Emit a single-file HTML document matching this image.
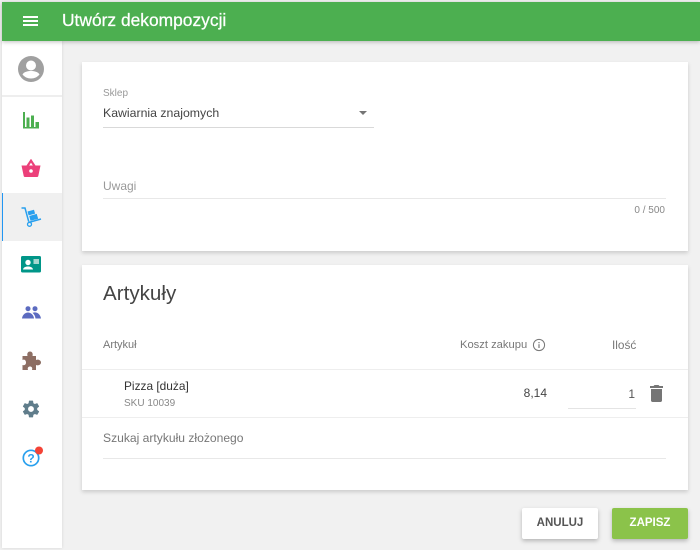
<!DOCTYPE html>
<html><head><meta charset="utf-8">
<style>
*{box-sizing:border-box}
html,body{margin:0;padding:0}
body{width:700px;height:550px;overflow:hidden;background:#f1f1f1;position:relative;font-family:"Liberation Sans",sans-serif;color:#444}
.a{position:absolute;white-space:nowrap}
.card{position:absolute;left:82px;width:606px;background:#fff;box-shadow:0 2px 4px rgba(0,0,0,.16)}
.l{position:absolute;height:1px;background:#e4e4e4}
svg{position:absolute;display:block}
</style></head><body>
<div class="a" style="left:2px;top:2px;width:698px;height:39px;background:#4caf50;box-shadow:0 1px 4px rgba(0,0,0,.25);z-index:3"></div>
<div class="a" style="left:23px;top:16px;width:15px;height:2px;background:#fff;z-index:4"></div>
<div class="a" style="left:23px;top:20px;width:15px;height:2px;background:#fff;z-index:4"></div>
<div class="a" style="left:23px;top:24px;width:15px;height:2px;background:#fff;z-index:4"></div>
<div class="a" style="left:62px;top:10px;font-size:17.4px;line-height:21px;color:#fff;z-index:4;-webkit-text-stroke:.25px #fff">Utwórz dekompozycji</div>

<div class="a" style="left:2px;top:41px;width:60px;height:507px;background:#fff;box-shadow:0 0 3px rgba(0,0,0,.12)"></div>
<div class="a" style="left:2px;top:95px;width:60px;height:2px;background:#eee"></div>
<div class="a" style="left:2px;top:193px;width:60px;height:48px;background:#f0f0f0;border-left:1px solid #2196f3"></div>

<svg style="left:17px;top:55px" width="28" height="28" viewBox="0 0 28 28"><circle cx="14" cy="14" r="13" fill="#a0a0a0"/><circle cx="14" cy="10.500" r="5" fill="#fff"/><path d="M5.500 19.500c1.500-2.800 5.500-3.500 8.500-3.500s7 .7 8.500 3.500c-2 2.500-5 4-8.500 4s-6.500-1.500-8.500-4z" fill="#fff"/></svg>

<svg style="left:22px;top:112px" width="18" height="18" viewBox="0 0 18 18" fill="#4caf50"><path d="M1 0h2v16H1z"/><rect x="1" y="15" width="16" height="1.500"/><rect x="4.500" y="5.500" width="3" height="10"/><rect x="9" y="3.500" width="3" height="12"/><rect x="13.500" y="10" width="3.500" height="6"/></svg>

<svg style="left:21px;top:159px" width="20" height="19" viewBox="0 0 20 19"><path d="M6.500 7l3.500-5.300L13.500 7" fill="none" stroke="#ec407a" stroke-width="2.200"/><path d="M.5 6.500h19l-2.200 10.500c-.1.600-.6 1-1.200 1H3.900c-.6 0-1.100-.4-1.200-1z" fill="#ec407a"/><circle cx="10" cy="12" r="1.800" fill="#fff"/></svg>

<svg style="left:21px;top:206px" width="21" height="21" viewBox="0 0 21 21"><path d="M0.500 2h3.500l3.700 13.500" fill="none" stroke="#29a0ee" stroke-width="1.500"/><path d="M7.500 16.500l12.500-3.500" fill="none" stroke="#29a0ee" stroke-width="1.500"/><circle cx="8.500" cy="18.300" r="2" fill="none" stroke="#29a0ee" stroke-width="1.300"/><path d="M6.500 5.500l6.500-1.800 1.100 3.900-6.500 1.800z" fill="#29a0ee"/><path d="M8.200 10l7.500-2.100 1.500 4.800-7.700 2.100z" fill="#29a0ee"/></svg>

<svg style="left:21px;top:256px" width="20" height="17" viewBox="0 0 20 17"><rect width="20" height="16.500" rx="1.500" fill="#009688"/><circle cx="7" cy="6.500" r="2.700" fill="#fff"/><path d="M2 13.500c.5-2.400 2.800-3 5-3s4.500 .6 5 3z" fill="#fff"/><rect x="12.500" y="3" width="5.500" height="5" fill="#a5d6cf"/></svg>

<svg style="left:22px;top:306px" width="19" height="13" viewBox="0 0 19 13" fill="#5c6bc0"><circle cx="6" cy="2.700" r="2.500"/><circle cx="13" cy="2.700" r="2.500"/><path d="M0 12.500c.3-3.500 3-6 6-6s5.700 2.500 6 6z"/><path d="M10.500 6.800c1-.3 1.800-.4 2.500-.4 3 0 5.500 2.600 6 6.100h-5.500c-.3-2.300-1.300-4.200-3-5.700z"/></svg>

<svg style="left:22px;top:351px" width="19" height="20" viewBox="0 0 19 20" fill="#8d6e63"><path d="M0.500 5h5c-.8-3 .8-4.500 2.500-4.500S11.300 2 10.500 5H14v4c2.500-1 5 .5 5 2.500S16.500 15 14 14v5h-4c.8-2.500-.5-3.500-2-3.500S5.200 16.500 6 19H.5v-5c2 .8 3.500-.5 3.500-2.500S2.500 8 .5 9z"/></svg>

<svg style="left:21px;top:399px" width="20" height="20" viewBox="0 0 24 24"><path fill="#607d8b" d="M19.430 12.980c.04-.32.07-.64.07-.98s-.03-.66-.07-.98l2.110-1.650c.19-.15.24-.42.12-.64l-2-3.460c-.12-.22-.39-.3-.61-.22l-2.490 1c-.52-.4-1.080-.73-1.690-.98l-.38-2.650C14.460 2.180 14.250 2 14 2h-4c-.25 0-.46.18-.49.42l-.38 2.650c-.61.25-1.170.59-1.690.98l-2.490-1c-.23-.09-.49 0-.61.22l-2 3.460c-.13.22-.07.49.12.64l2.110 1.650c-.04.32-.07.65-.07.98s.03.66.07.98l-2.110 1.650c-.19.15-.24.42-.12.64l2 3.460c.12.22.39.3.61.22l2.490-1c.52.4 1.080.73 1.690.98l.38 2.650c.03.24.24.42.49.42h4c.25 0 .46-.18.49-.42l.38-2.650c.61-.25 1.170-.59 1.690-.98l2.490 1c.23.09.49 0 .61-.22l2-3.460c.12-.22.07-.49-.12-.64l-2.110-1.650zM12 15.500c-1.930 0-3.500-1.570-3.500-3.500s1.570-3.500 3.500-3.500 3.500 1.570 3.500 3.500-1.570 3.500-3.500 3.500z"/></svg>

<svg style="left:22px;top:446px" width="22" height="22" viewBox="0 0 22 22"><circle cx="9" cy="12" r="7.700" fill="none" stroke="#29a0ee" stroke-width="1.700"/><text x="9" y="16.500" text-anchor="middle" font-family="Liberation Sans" font-weight="700" font-size="12" fill="#29a0ee">?</text><circle cx="17" cy="4.500" r="4" fill="#f44336"/></svg>

<div class="card" style="top:62px;height:189px"></div>
<div class="a" style="left:103px;top:87px;font-size:10px;line-height:13px;color:#999">Sklep</div>
<div class="a" style="left:103px;top:105px;font-size:12.300px;line-height:16px;color:#444">Kawiarnia znajomych</div>
<div class="a" style="left:359px;top:111px;border-left:4px solid transparent;border-right:4px solid transparent;border-top:4px solid #757575"></div>
<div class="l" style="left:103px;top:127px;width:271px;background:#d9d9d9"></div>
<div class="a" style="left:103px;top:178px;font-size:12px;line-height:16px;color:#999">Uwagi</div>
<div class="l" style="left:103px;top:198px;width:563px;background:#e8e8e8"></div>
<div class="a" style="right:35px;top:204px;font-size:10px;line-height:13px;color:#888">0 / 500</div>

<div class="card" style="top:265px;height:225px"></div>
<div class="a" style="left:103px;top:281px;font-size:20.600px;line-height:26px;color:#444">Artykuły</div>
<div class="a" style="left:103px;top:338px;font-size:11px;line-height:14px;color:#777">Artykuł</div>
<div class="a" style="left:460px;top:338px;font-size:11.200px;line-height:14px;color:#777">Koszt zakupu</div>
<svg style="left:532px;top:338px" width="14" height="14" viewBox="0 0 14 14"><circle cx="7" cy="7" r="5.600" fill="none" stroke="#777" stroke-width="1"/><rect x="6.400" y="6.200" width="1.200" height="3.800" fill="#777"/><rect x="6.400" y="4" width="1.200" height="1.200" fill="#777"/></svg>
<div class="a" style="left:612px;top:338px;font-size:11.800px;line-height:14px;color:#777">Ilość</div>
<div class="l" style="left:82px;top:369px;width:606px;background:#eee"></div>
<div class="a" style="left:124px;top:379px;font-size:11.900px;line-height:15px;color:#333">Pizza [duża]</div>
<div class="a" style="left:124px;top:397px;font-size:10px;line-height:13px;color:#888">SKU 10039</div>
<div class="a" style="right:153px;top:386px;font-size:12px;line-height:15px;color:#444">8,14</div>
<div class="a" style="right:65px;top:387px;font-size:12px;line-height:15px;color:#555">1</div>
<div class="l" style="left:568px;top:408px;width:68px;background:#e4e4e4"></div>
<svg style="left:650px;top:385px" width="13" height="17" viewBox="0 0 13 17" fill="#757575"><path d="M4.500 0h4l1 1h3.500v2H0V1h3.500z"/><path d="M1 4h11v11.500c0 .8-.7 1.500-1.500 1.500h-8C1.700 17 1 16.300 1 15.500z"/></svg>
<div class="l" style="left:82px;top:417px;width:606px;background:#eee"></div>
<div class="a" style="left:103px;top:431px;font-size:12.100px;line-height:15px;color:#777">Szukaj artykułu złożonego</div>
<div class="l" style="left:103px;top:458px;width:563px;background:#e8e8e8"></div>

<div class="a" style="left:522px;top:508px;width:76px;height:31px;background:#fff;border-radius:2px;box-shadow:0 2px 4px rgba(0,0,0,.25);text-align:center;font-size:11.500px;line-height:31px;font-weight:700;color:#555">ANULUJ</div>
<div class="a" style="left:612px;top:508px;width:76px;height:31px;background:#8bc34a;border-radius:2px;box-shadow:0 2px 4px rgba(0,0,0,.25);text-align:center;font-size:11.500px;line-height:31px;font-weight:700;color:#fff">ZAPISZ</div>
</body></html>
